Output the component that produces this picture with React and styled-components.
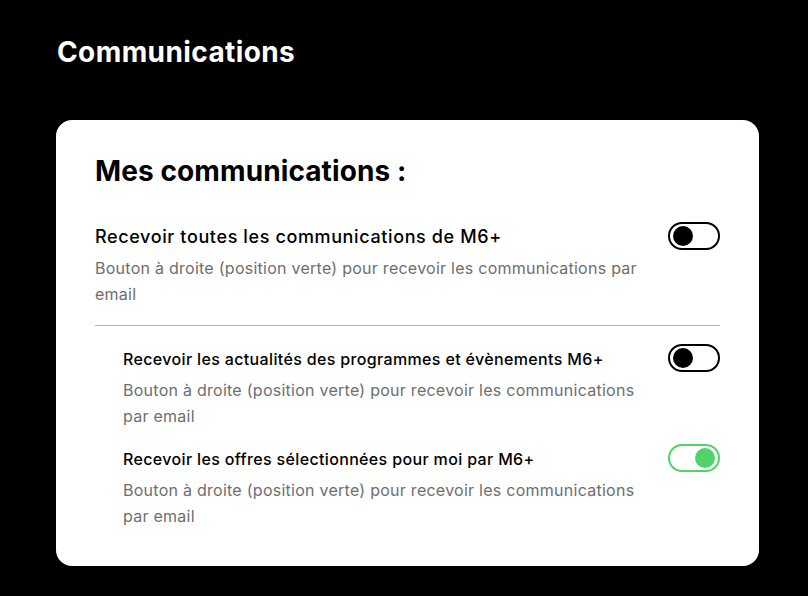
import React, { useState } from 'react';
import styled, { createGlobalStyle } from 'styled-components';

const GlobalStyle = createGlobalStyle`
  html, body {
    margin: 0;
    padding: 0;
    background: #000;
  }
  body {
    font-family: Inter, "Noto Sans", sans-serif;
    -webkit-font-smoothing: antialiased;
  }
`;

const items = [
  {
    id: 'news',
    title: 'Recevoir les actualités des programmes et évènements M6+',
    on: false,
  },
  {
    id: 'offers',
    title: 'Recevoir les offres sélectionnées pour moi par M6+',
    on: true,
  },
];

const DESC =
  'Bouton à droite (position verte) pour recevoir les communications par email';

const Toggle = ({ checked, onChange }) => (
  <Switch
    type="button"
    role="switch"
    aria-checked={checked}
    $on={checked}
    onClick={() => onChange(!checked)}
  >
    <Knob $on={checked} />
  </Switch>
);

const App = () => {
  const [all, setAll] = useState(false);
  const [subs, setSubs] = useState(
    items.reduce((acc, it) => ({ ...acc, [it.id]: it.on }), {})
  );

  return (
    <Page>
      <GlobalStyle />
      <PageTitle>Communications</PageTitle>
      <Card>
        <CardTitle>Mes communications :</CardTitle>
        <Row>
          <TextCol>
            <RowTitle>Recevoir toutes les communications de M6+</RowTitle>
            <RowDesc>{DESC}</RowDesc>
          </TextCol>
          <Toggle checked={all} onChange={setAll} />
        </Row>
        <Divider />
        <SubList>
          {items.map((it) => (
            <Row key={it.id} $sub>
              <TextCol>
                <RowTitle $sub>{it.title}</RowTitle>
                <RowDesc>{DESC}</RowDesc>
              </TextCol>
              <Toggle
                checked={subs[it.id]}
                onChange={(v) => setSubs({ ...subs, [it.id]: v })}
              />
            </Row>
          ))}
        </SubList>
      </Card>
    </Page>
  );
};

export default App;

const Page = styled.div`
  padding: 33px 49px 30px 56px;
  color: #fff;
`;

const PageTitle = styled.h1`
  margin: 0 0 49px 1px;
  font-size: 28px;
  line-height: 38px;
  font-weight: 700;
  letter-spacing: 0.4px;
  color: #fff;
`;

const Card = styled.section`
  background: #fff;
  color: #000;
  border-radius: 16px;
  padding: 34px 39px 37px 39px;
`;

const CardTitle = styled.h2`
  margin: 0 0 37px;
  font-size: 28px;
  line-height: 34px;
  font-weight: 700;
  letter-spacing: 0.1px;
`;

const Row = styled.div`
  display: flex;
  align-items: flex-start;
  justify-content: space-between;
  gap: 25px;
  padding-left: ${(p) => (p.$sub ? '28px' : '0')};
`;

const TextCol = styled.div`
  flex: 1;
  min-width: 0;
`;

const RowTitle = styled.div`
  font-size: ${(p) => (p.$sub ? '16px' : '18px')};
  line-height: 24px;
  font-weight: 500;
  letter-spacing: ${(p) => (p.$sub ? '0.35px' : '0.62px')};
  margin-bottom: 6px;
`;

const RowDesc = styled.p`
  margin: 0;
  font-size: 16px;
  line-height: 26px;
  color: #6e6e6e;
  letter-spacing: 0.26px;
`;

const Divider = styled.hr`
  border: 0;
  border-top: 1px solid #b3b3b3;
  margin: 18px 0 21px;
`;

const SubList = styled.div`
  display: flex;
  flex-direction: column;
  gap: 18px;
`;

const Switch = styled.button`
  flex: none;
  position: relative;
  width: 52px;
  height: 28px;
  margin-top: -3px;
  padding: 0;
  border-radius: 14px;
  border: 2px solid ${(p) => (p.$on ? '#4fd46b' : '#000')};
  background: #fff;
  cursor: pointer;
  box-sizing: border-box;
`;

const Knob = styled.span`
  position: absolute;
  top: 2px;
  left: ${(p) => (p.$on ? '25px' : '3px')};
  width: 20px;
  height: 20px;
  border-radius: 50%;
  background: ${(p) => (p.$on ? '#4fd46b' : '#000')};
`;
